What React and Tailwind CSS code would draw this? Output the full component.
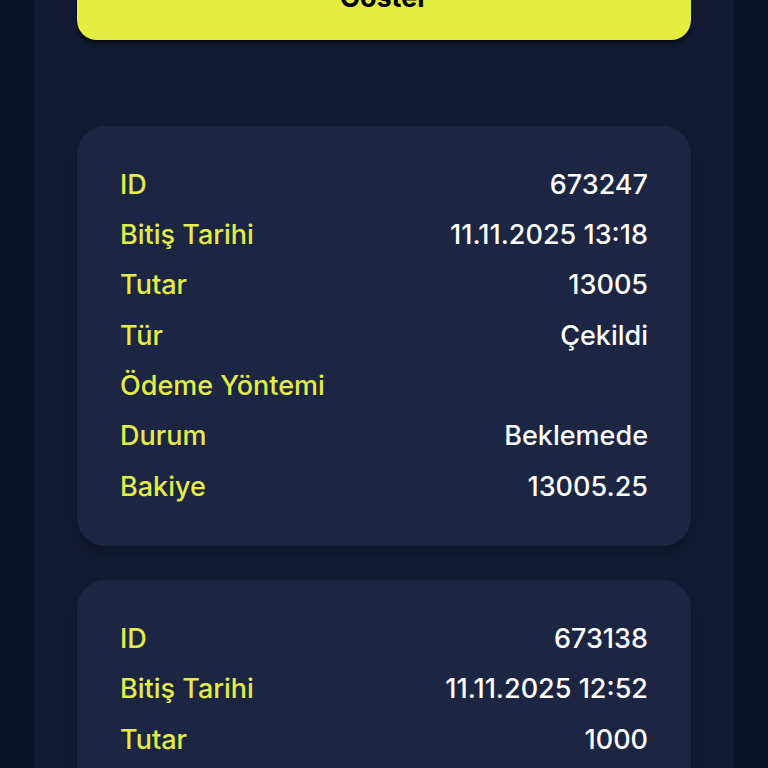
import React from 'react';

const items = [
  {
    id: '673247',
    date: '11.11.2025 13:18',
    amount: '13005',
    type: 'Çekildi',
    method: '',
    status: 'Beklemede',
    balance: '13005.25',
  },
  {
    id: '673138',
    date: '11.11.2025 12:52',
    amount: '1000',
    type: 'Çekildi',
    method: '',
    status: 'Beklemede',
    balance: '12005.25',
  },
];

function Row({ label, value }) {
  return (
    <div className="flex items-center justify-between h-[50.3px]">
      <span className="text-[#e3ec48]">{label}</span>
      <span className="text-white">{value}</span>
    </div>
  );
}

function HistoryCard({ item }) {
  return (
    <div className="bg-[#1c2541] rounded-[28px] px-[43px] pt-[34px] pb-[34px] shadow-[0_6px_14px_rgba(0,0,0,0.25)]">
      <Row label="ID" value={item.id} />
      <Row label="Bitiş Tarihi" value={item.date} />
      <Row label="Tutar" value={item.amount} />
      <Row label="Tür" value={item.type} />
      <Row label="Ödeme Yöntemi" value={item.method} />
      <Row label="Durum" value={item.status} />
      <Row label="Bakiye" value={item.balance} />
    </div>
  );
}

export default function App() {
  return (
    <div
      className="min-h-screen bg-[#0c1329] flex justify-center overflow-hidden text-[27px] font-medium"
      style={{ fontFamily: 'Inter, "Noto Sans", sans-serif' }}
    >
      <div className="w-[700px] bg-[#131a33] px-[43px] -mt-[44px] pb-10">
        <button className="w-full bg-[#e4ec40] text-black font-bold leading-[40px] py-[22px] rounded-[20px] shadow-[0_3px_4px_rgba(0,0,0,0.6)]">
          Göster
        </button>

        <div className="mt-[86px] flex flex-col gap-[34px]">
          {items.map((item) => (
            <HistoryCard key={item.id} item={item} />
          ))}
        </div>
      </div>
    </div>
  );
}
